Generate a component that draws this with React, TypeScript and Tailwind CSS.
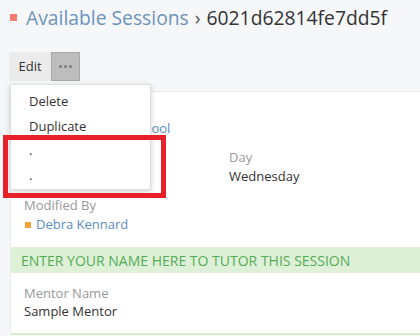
export default function App() {
  return (
    <div className="min-h-[336px] bg-[#f6f7f9] font-['Open_Sans',sans-serif] text-[13px] text-[#333] overflow-hidden">
      {/* HEADER */}
      <div className="flex items-center pl-[10px] pt-[3px] h-[32px]">
        <span className="w-[7px] h-[7px] bg-[#f47c6a] mr-[9px]" />
        <span className="text-[19.3px] text-[#6b93b9] leading-[28px]">Available Sessions</span>
        <span className="text-[19.3px] text-[#555] mx-[6px] leading-[28px]">›</span>
        <span className="text-[19.3px] text-[#333] leading-[28px]">6021d62814fe7dd5f</span>
      </div>

      {/* ACTIONS */}
      <div className="relative mt-[20px] ml-[9px]">
        <div className="flex h-[29px]">
          <button className="w-[42px] bg-[#ebebeb] text-[13px] text-[#333]">Edit</button>
          <button className="w-[29px] bg-[#bdbdbd] border border-[#aaaaaa] flex items-center justify-center gap-[2px]">
            <span className="w-[3px] h-[3px] rounded-full bg-[#7d7d7d]" />
            <span className="w-[3px] h-[3px] rounded-full bg-[#7d7d7d]" />
            <span className="w-[3px] h-[3px] rounded-full bg-[#7d7d7d]" />
          </button>
        </div>

        {/* DROPDOWN */}
        <div className="absolute z-10 left-[1px] top-[32px] w-[141px] bg-white border border-[#e0e0e0] shadow-[0_2px_6px_rgba(0,0,0,0.18)] pt-[4px] pb-[2px]">
          {["Delete", "Duplicate", ".", "."].map((item, i) => (
            <div key={i} className="h-[24.5px] leading-[24.5px] pl-[18px] text-[13px] text-[#333]">
              {item}
            </div>
          ))}
        </div>

        {/* ANNOTATION */}
        <div className="absolute z-20 left-[-6px] top-[83px] w-[163px] h-[63px] border-[5px] border-[#e8202a]" />
      </div>

      {/* CARD */}
      <div className="mt-[10px] ml-[10px] w-[420px] bg-white border-l border-t border-[#e8ebee] border-b-2 border-b-[#d6edd0]">
        <div className="pl-[13px] pt-[8px] pb-[13px] leading-[19px]">
          <div>
            <div className="text-[#999]">Session Location</div>
            <div className="text-[#5b8dc0]">Main Library Hall School</div>
          </div>
          <div className="flex mt-[10px]">
            <div className="w-[205px]">
              <div className="text-[#999]">Time</div>
              <div>4:00 PM</div>
            </div>
            <div>
              <div className="text-[#999]">Day</div>
              <div>Wednesday</div>
            </div>
          </div>
          <div className="mt-[10px]">
            <div className="text-[#999]">Modified By</div>
            <div className="flex items-center">
              <span className="w-[6px] h-[6px] bg-[#f7a035] ml-[1px] mr-[5px]" />
              <span className="text-[#5b8dc0]">Debra Kennard</span>
            </div>
          </div>
        </div>

        <div className="h-[26px] bg-[#dff0d8] pl-[10px] flex items-center text-[14px] text-[#52ad54] uppercase">
          Enter your name here to tutor this session
        </div>

        <div className="pl-[13px] pt-[11px] pb-[13px] leading-[18px]">
          <div className="text-[#999]">Mentor Name</div>
          <div>Sample Mentor</div>
        </div>
      </div>
    </div>
  );
}
